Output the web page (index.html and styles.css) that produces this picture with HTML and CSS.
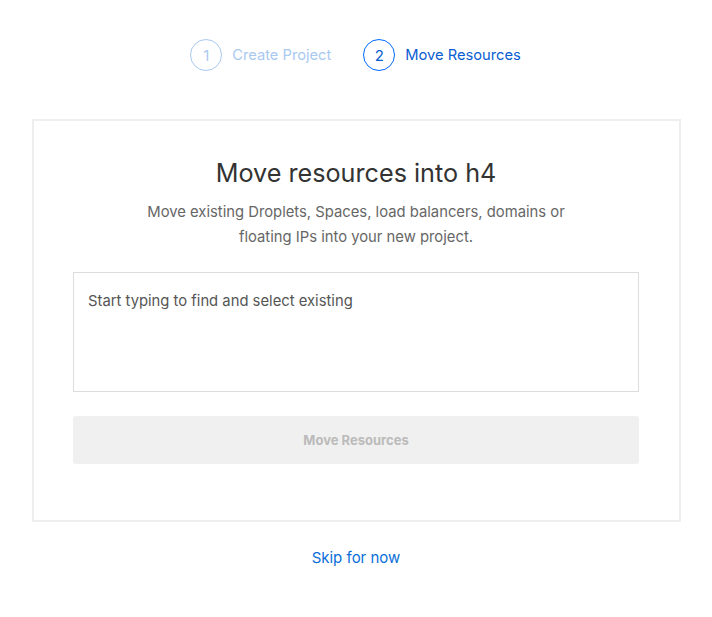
FILE: index.html
```html
<!DOCTYPE html>
<html>
<head>
<meta charset="utf-8">
<link rel="stylesheet" href="styles.css">
</head>
<body>
<div class="page">
  <div class="steps">
    <div class="step done">
      <span class="num">1</span>
      <span class="label">Create Project</span>
    </div>
    <div class="step active">
      <span class="num">2</span>
      <span class="label">Move Resources</span>
    </div>
  </div>
  <div class="card">
    <h1 class="title">Move resources into h4</h1>
    <p class="sub">Move existing Droplets, Spaces, load balancers, domains or<br>floating IPs into your new project.</p>
    <div class="picker">Start typing to find and select existing</div>
    <button class="btn">Move Resources</button>
  </div>
  <a class="skip">Skip for now</a>
</div>
</body>
</html>
```
FILE: styles.css
```css
* { box-sizing: border-box; }
html, body { margin: 0; padding: 0; background: #fff; }
body { font-family: "Inter", "Liberation Sans", sans-serif; color: #444; }
.page { width: 712px; display: flex; flex-direction: column; align-items: center; padding-top: 39px; }
.steps { display: flex; gap: 32px; height: 32px; align-items: center; margin-right: 1px; }
.step { display: flex; align-items: center; gap: 10px; font-size: 14.7px; }
.num { width: 32px; height: 32px; border-radius: 50%; display: flex; align-items: center; justify-content: center; font-size: 15px; border: 1px solid; }
.done .num { border-color: #a9c9ef; color: #a9c9ef; }
.done .label { color: #a9c9ef; }
.active .num { border-color: #0069ff; color: #0a5ed1; }
.active .label { color: #0a5ed1; }
.card { margin-top: 48px; width: 649px; border: 2px solid #eee; padding: 36px 40px 56px; display: flex; flex-direction: column; align-items: center; }
.title { margin: 0; font-size: 25.2px; font-weight: 400; color: #333; line-height: 32px; }
.sub { margin: 11px 0 0; font-size: 14.8px; line-height: 25px; color: #666; text-align: center; }
.picker { margin-top: 22px; width: 566px; height: 120px; border: 1px solid #ddd; padding: 19px 14px; font-size: 14.8px; color: #555; }
.btn { margin-top: 24px; width: 566px; height: 48px; border: 0; border-radius: 3px; background: #f0f0f0; color: #bbb; font-family: inherit; font-weight: 700; font-size: 13px; }
.skip { margin-top: 26px; font-size: 15px; color: #0a6ed9; }
```
